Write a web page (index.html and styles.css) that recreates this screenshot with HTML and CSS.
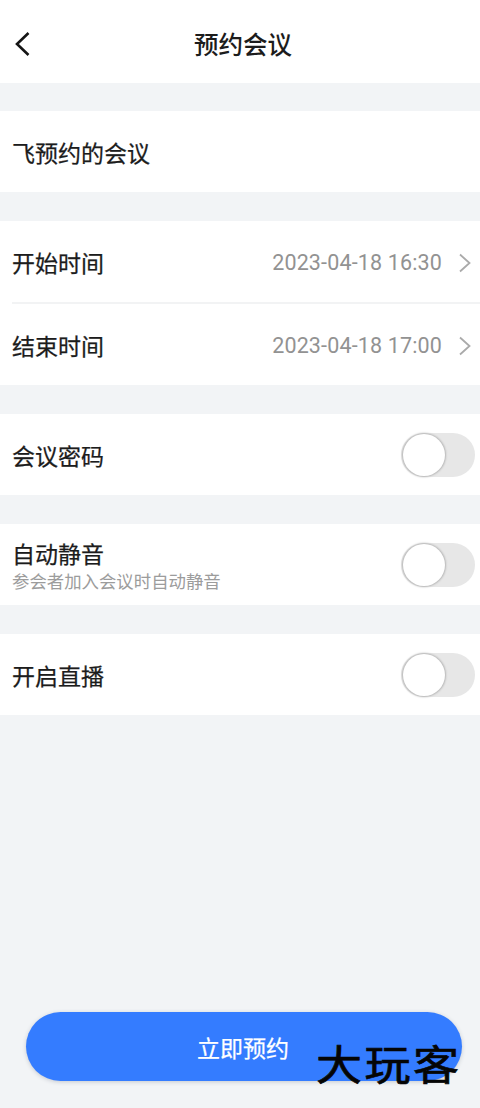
FILE: index.html
```html
<!DOCTYPE html>
<html lang="zh-CN">
<head>
<meta charset="utf-8">
<title>预约会议</title>
<link rel="stylesheet" href="styles.css">
</head>
<body>
<div class="screen">
  <header class="header">
    <svg class="back" viewBox="0 0 16 24" aria-hidden="true"><path d="M14.5 1 3 12 14.5 23"/></svg>
    <h1 class="title">预约会议</h1>
  </header>
  <main class="form">
    <section class="row">飞预约的会议</section>
    <section class="group">
      <div class="row">
        <span>开始时间</span>
        <span class="date">2023-04-18 16:30</span>
        <svg class="chevron" viewBox="0 0 12 20" aria-hidden="true"><path d="M1 1.5 10.5 10 1 18.5"/></svg>
      </div>
      <div class="divider"></div>
      <div class="row">
        <span>结束时间</span>
        <span class="date">2023-04-18 17:00</span>
        <svg class="chevron" viewBox="0 0 12 20" aria-hidden="true"><path d="M1 1.5 10.5 10 1 18.5"/></svg>
      </div>
    </section>
    <section class="row"><span>会议密码</span><span class="switch"><span class="knob"></span></span></section>
    <section class="row">
      <div class="stack"><span class="label">自动静音</span><span class="hint">参会者加入会议时自动静音</span></div>
      <span class="switch"><span class="knob"></span></span>
    </section>
    <section class="row"><span>开启直播</span><span class="switch"><span class="knob"></span></span></section>
  </main>
  <footer class="footer">
    <button class="submit">立即预约</button>
    <span class="watermark">大玩客</span>
  </footer>
</div>
</body>
</html>
```
FILE: styles.css
```css
* { box-sizing: border-box; }
body {
  margin: 0;
  background: #f2f4f6;
  color: #1c1c1c;
  font-family: "Noto Sans CJK SC", sans-serif;
  font-size: 23px;
  line-height: 34px;
}
.screen {
  width: 480px;
  height: 1108px;
  display: flex;
  flex-direction: column;
  overflow: hidden;
}
.header {
  height: 83px;
  padding: 4px 14px 0;
  display: grid;
  grid-template-columns: 16px 1fr 10px;
  align-items: center;
  background: #fff;
}
.back { width: 16px; height: 24px; fill: none; stroke: #151515; stroke-width: 2.6; }
.title {
  margin: 0;
  text-align: center;
  font-size: 24.5px;
  font-weight: 500;
}
.form {
  margin-top: 28px;
  display: flex;
  flex-direction: column;
  gap: 29px;
  -webkit-text-stroke: .25px;
}
.row {
  height: 81px;
  padding: 0 5px 0 12px;
  display: flex;
  align-items: center;
  justify-content: space-between;
  background: #fff;
}
.group { background: #fff; }
.divider { height: 2px; margin-left: 12px; background: #f2f3f4; }
.date {
  margin-left: auto;
  padding-top: 3px;
  color: #929292;
  font-family: Roboto, sans-serif;
  font-size: 21.5px;
  letter-spacing: .15px;
  -webkit-text-stroke: 0;
}
.chevron {
  width: 12px;
  height: 20px;
  margin: 2px 4px 0 17px;
  fill: none;
  stroke: #aaa;
  stroke-width: 1.8;
}
.switch {
  width: 74px;
  height: 44px;
  border-radius: 22px;
  background: #e7e7e7;
}
.knob {
  display: block;
  width: 42px;
  height: 42px;
  margin: 1px 2px;
  border-radius: 50%;
  background: #fff;
  box-shadow: 0 0 2px 1px #b5b5b5;
}
.stack { display: flex; flex-direction: column; padding-top: 1px; }
.label { line-height: 30px; }
.hint { font-size: 17.4px; line-height: 25px; color: #9c9c9c; -webkit-text-stroke: 0; }
.footer {
  position: relative;
  margin: auto 18px 27px 26px;
}
.submit {
  display: block;
  width: 436px;
  height: 69px;
  padding: 1px 2px 0 0;
  border: 0;
  border-radius: 35px;
  background: #347cff;
  box-shadow: 0 1px 4px #c5c9d0;
  color: #fff;
  font: inherit;
  -webkit-text-stroke: .25px;
}
.watermark {
  position: absolute;
  left: 290px;
  top: 25px;
  color: #050505;
  font-size: 46px;
  letter-spacing: 2.5px;
  line-height: 50px;
  font-weight: 400;
  -webkit-text-stroke: .8px #050505;
  white-space: nowrap;
  transform: scaleY(.88);
}
```
